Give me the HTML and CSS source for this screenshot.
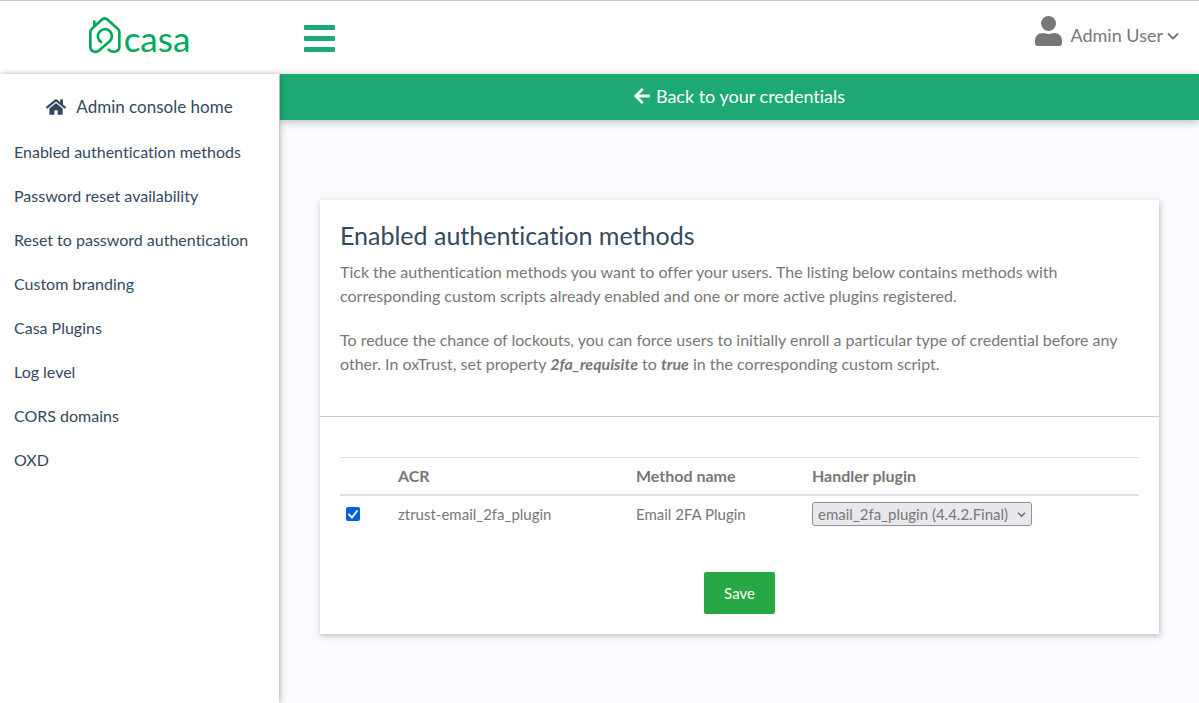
FILE: index.html
```html
<!DOCTYPE html>
<html lang="en">
<head>
<meta charset="utf-8">
<title>Casa - Enabled authentication methods</title>
<link rel="stylesheet" href="styles.css">
</head>
<body>
<header class="topbar">
  <a class="brand" href="#">
    <svg class="brand-mark" viewBox="54 48 102 114" aria-hidden="true">
      <path d="M93 126A21 21 0 1 1 120 123L88 151C78 160 61 155 61 140V96Q61 90 66 86L94 60Q104 51 114 60L143 86Q148 90 148 97V140C148 156 128 160 116 149M73 80V65"/>
    </svg>
    <span class="brand-name">casa</span>
  </a>
  <button class="menu-toggle" type="button" aria-label="Toggle menu">
    <span class="bar"></span><span class="bar"></span><span class="bar"></span>
  </button>
  <button class="user-menu" type="button">
    <svg class="user-icon" viewBox="0 0 27 30" aria-hidden="true"><circle cx="13.500" cy="7.500" r="7.500"/><path d="M8 17C10 17 11 18 13.500 18S17 17 19 17C24 17 27 20 27 25V27Q27 30 24 30H3Q0 30 0 27V25C0 20 3 17 8 17Z"/></svg>
    <span>Admin User</span>
    <svg class="chevron" viewBox="0 0 12 12" aria-hidden="true"><path d="M1.500 5L6 9.500L10.500 5"/></svg>
  </button>
</header>
<div class="layout">
  <nav class="sidebar">
    <a class="home-link" href="#">
      <svg class="home-icon" viewBox="0 0 576 512" aria-hidden="true"><path d="M280.370 148.260L96 300.110V464a16 16 0 0 0 16 16l112.060-.29a16 16 0 0 0 15.920-16V368a16 16 0 0 1 16-16h64a16 16 0 0 1 16 16v95.640a16 16 0 0 0 16 16.050L464 480a16 16 0 0 0 16-16V300L295.670 148.260a12.190 12.190 0 0 0-15.300 0zM571.600 251.470L488 182.560V44.050a12 12 0 0 0-12-12h-56a12 12 0 0 0-12 12v72.610L318.470 43a48 48 0 0 0-61 0L4.340 251.470a12 12 0 0 0-1.600 16.900l25.500 31A12 12 0 0 0 45.150 301l235.220-193.740a12.190 12.190 0 0 1 15.300 0L530.900 301a12 12 0 0 0 16.900-1.600l25.500-31a12 12 0 0 0-1.700-16.930z"/></svg>
      <span>Admin console home</span>
    </a>
    <a class="nav-link" href="#">Enabled authentication methods</a>
    <a class="nav-link" href="#">Password reset availability</a>
    <a class="nav-link" href="#">Reset to password authentication</a>
    <a class="nav-link" href="#">Custom branding</a>
    <a class="nav-link" href="#">Casa Plugins</a>
    <a class="nav-link" href="#">Log level</a>
    <a class="nav-link" href="#">CORS domains</a>
    <a class="nav-link" href="#">OXD</a>
  </nav>
  <main class="content">
    <a class="back-bar" href="#">
      <svg class="back-icon" viewBox="0 0 448 512" aria-hidden="true"><path d="M257.500 445.100l-22.200 22.200c-9.400 9.400-24.600 9.400-33.900 0L7 273c-9.400-9.400-9.400-24.600 0-33.900L201.400 44.700c9.400-9.400 24.600-9.400 33.900 0l22.200 22.200c9.500 9.500 9.300 25-.4 34.300L136.600 216H424c13.300 0 24 10.700 24 24v32c0 13.300-10.700 24-24 24H136.600l120.500 114.800c9.800 9.300 10 24.800.4 34.300z"/></svg>
      <span>Back to your credentials</span>
    </a>
    <form class="card">
      <section class="intro">
        <h1 class="title">Enabled authentication methods</h1>
        <p class="text">Tick the authentication methods you want to offer your users. The listing below contains methods with corresponding custom scripts already enabled and one or more active plugins registered.</p>
        <p class="text">To reduce the chance of lockouts, you can force users to initially enroll a particular type of credential before any other. In oxTrust, set property <b class="term">2fa_requisite</b> to <b class="term">true</b> in the corresponding custom script.</p>
      </section>
      <section class="methods">
        <table class="table">
          <colgroup><col class="col-check"><col class="col-acr"><col class="col-name"><col></colgroup>
          <thead>
            <tr><th></th><th>ACR</th><th>Method name</th><th>Handler plugin</th></tr>
          </thead>
          <tbody>
            <tr>
              <td><input class="check" id="m1" type="checkbox" checked></td>
              <td><label for="m1">ztrust-email_2fa_plugin</label></td>
              <td>Email 2FA Plugin</td>
              <td><span class="select-wrap"><select class="select" aria-label="Handler plugin"><option>email_2fa_plugin (4.4.2.Final)</option></select><svg class="select-arrow" viewBox="0 0 10 10" aria-hidden="true"><path d="M1 3L5 7L9 3"/></svg></span></td>
            </tr>
          </tbody>
        </table>
        <button class="save" type="button">Save</button>
      </section>
    </form>
  </main>
</div>
</body>
</html>
```
FILE: styles.css
```css
* { box-sizing: border-box; }

body {
  margin: 0;
  min-height: 100vh;
  display: flex;
  flex-direction: column;
  font-family: Lato, "Liberation Sans", sans-serif;
  font-size: 16px;
  line-height: 24px;
  font-variant-ligatures: none;
  color: #777;
  background: #fafbff;
}

a { color: inherit; text-decoration: none; }
button { font: inherit; color: inherit; border: 0; background: none; padding: 0; cursor: pointer; }

.topbar {
  display: flex;
  align-items: center;
  height: 74px;
  border-top: 1px solid #ccc;
  background: #fff;
  box-shadow: 0 0 8px rgba(0, 0, 0, .2);
}
.brand {
  width: 278px;
  display: flex;
  align-items: center;
  justify-content: center;
  gap: 2px;
  padding-bottom: 4px;
  color: #00a85a;
}
.brand-mark { width: 34px; height: 38px; margin-bottom: 2px; fill: none; stroke: currentColor; stroke-width: 8; stroke-linecap: round; stroke-linejoin: round; }
.brand-name { font-size: 35px; line-height: 38px; padding-top: 4px; }

.menu-toggle { display: flex; flex-direction: column; gap: 6px; width: 31px; margin-left: 26px; padding-top: 2px; }
.bar { height: 5px; border-radius: 1px; background: #1ca974; }

.user-menu { display: flex; align-items: center; gap: 4px; margin-left: auto; padding: 0 20px 6px 0; font-size: 18px; }
.user-icon { width: 27px; height: 30px; margin-right: 4px; margin-bottom: 8px; fill: #777; }
.chevron { width: 12px; height: 12px; fill: none; stroke: #777; stroke-width: 2; stroke-linecap: round; stroke-linejoin: round; }

.layout { flex: 1; display: flex; position: relative; }
.sidebar {
  flex: 0 0 279px;
  display: flex;
  flex-direction: column;
  background: #fff;
  color: #34495e;
  position: relative;
  box-shadow: 1px 0 6px rgba(0, 0, 0, .3);
}
.home-link { display: flex; align-items: center; justify-content: center; gap: 10px; padding: 20px 0 10px; font-size: 17px; line-height: 26px; }
.home-icon { width: 20px; height: 18px; fill: currentColor; }
.nav-link { padding: 10px 14px; }

.content { flex: 1; display: flex; flex-direction: column; margin-left: 1px; }
.back-bar {
  display: flex;
  align-items: center;
  justify-content: center;
  gap: 6px;
  height: 46px;
  padding-bottom: 2px;
  background: #1ca974;
  color: #fff;
  font-size: 18px;
  box-shadow: 0 2px 8px rgba(0, 0, 0, .25);
}
.back-icon { width: 16px; height: 18px; fill: currentColor; }

.card { margin: 80px 40px 40px; background: #fff; box-shadow: 1px 2px 6px rgba(0, 0, 0, .25); }
.intro { padding: 20px 20px 40px; border-bottom: 1px solid #ccc; }
.title { margin: 0 0 10px; font-size: 25px; line-height: 30px; font-weight: 400; color: #34495e; }
.text { margin: 0; }
.text + .text { margin-top: 20px; }
.term { font-style: italic; }

.methods { display: flex; flex-direction: column; align-items: center; padding: 40px 20px 20px; }
.table { width: 100%; border-collapse: collapse; table-layout: fixed; margin-bottom: 40px; }
.col-check { width: 52px; }
.col-acr { width: 238px; }
.col-name { width: 176px; }
.table th { padding: 6px; line-height: 24px; text-align: left; border-top: 1px solid #dee2e6; border-bottom: 2px solid #dee2e6; }
.table td { padding: 6px; font-size: 15px; line-height: 22px; vertical-align: middle; }

.check {
  appearance: none;
  display: block;
  width: 14px;
  height: 14px;
  margin: 0;
  border-radius: 2px;
  background: #0060df url("data:image/svg+xml,%3Csvg xmlns='http://www.w3.org/2000/svg' viewBox='0 0 14 14'%3E%3Cpath d='M3 7.500L6 10.500L11 4' fill='none' stroke='white' stroke-width='2' stroke-linecap='round' stroke-linejoin='round'/%3E%3C/svg%3E");
}
.select-wrap { display: grid; align-items: center; width: max-content; }
.select {
  grid-area: 1 / 1;
  appearance: none;
  height: 24px;
  padding: 0 22px 0 5px;
  border: 1px solid #8f8f9d;
  border-radius: 3px;
  background: #e9e9ed;
  color: #777;
  font: inherit;
}
.select-arrow { grid-area: 1 / 1; justify-self: end; width: 9px; height: 9px; margin-right: 6px; fill: none; stroke: #666; stroke-width: 1.500; pointer-events: none; }

.save { padding: 9px 20px; font-size: 15px; border-radius: 2px; background: #28a745; color: #fff; }
```
